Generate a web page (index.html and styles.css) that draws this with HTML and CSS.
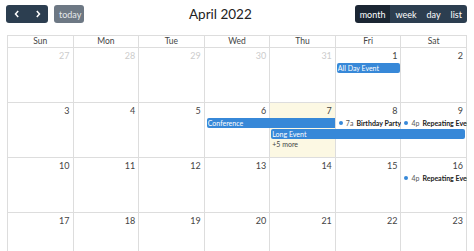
FILE: index.html
```html
<!DOCTYPE html>
<html lang="en">
<head>
    <meta charset="UTF-8">
    <title>Calendar</title>
    <link rel="stylesheet" href="styles.css">
</head>
<body>
    <div class="toolbar">
        <div class="tb-chunk">
            <div class="btn-group">
                <button class="btn btn-icon" aria-label="prev">
                    <svg width="6" height="8" viewBox="0 0 6 8"><path d="M4.2 1 L1.5 4 L4.2 7" fill="none" stroke="#fff" stroke-width="1.5"/></svg>
                </button>
                <button class="btn btn-icon" aria-label="next">
                    <svg width="6" height="8" viewBox="0 0 6 8"><path d="M1.8 1 L4.5 4 L1.8 7" fill="none" stroke="#fff" stroke-width="1.5"/></svg>
                </button>
            </div>
            <button class="btn btn-today">today</button>
        </div>
        <h2 class="title">April 2022</h2>
        <div class="btn-group">
            <button class="btn active">month</button>
            <button class="btn">week</button>
            <button class="btn">day</button>
            <button class="btn">list</button>
        </div>
    </div>

    <div class="cal">
        <div class="head">
            <div>Sun</div><div>Mon</div><div>Tue</div><div>Wed</div><div>Thu</div><div>Fri</div><div>Sat</div>
        </div>

        <div class="week">
            <div class="day c1 other">27</div>
            <div class="day c2 other">28</div>
            <div class="day c3 other">29</div>
            <div class="day c4 other">30</div>
            <div class="day c5 other">31</div>
            <div class="day c6">1</div>
            <div class="day c7">2</div>
            <div class="ev block r1" style="grid-column: 6 / 7">All Day Event</div>
        </div>

        <div class="week">
            <div class="day c1">3</div>
            <div class="day c2">4</div>
            <div class="day c3">5</div>
            <div class="day c4">6</div>
            <div class="day c5 today">7</div>
            <div class="day c6">8</div>
            <div class="day c7">9</div>
            <div class="ev block r1 start" style="grid-column: 4 / 6">Conference</div>
            <div class="ev dot r1" style="grid-column: 6 / 7"><i></i><span class="time">7a</span><b>Birthday Party</b></div>
            <div class="ev dot r1" style="grid-column: 7 / 8"><i></i><span class="time">4p</span><b>Repeating Event</b></div>
            <div class="ev block r2 end" style="grid-column: 5 / 8">Long Event</div>
            <div class="more r3" style="grid-column: 5 / 6">+5 more</div>
        </div>

        <div class="week">
            <div class="day c1">10</div>
            <div class="day c2">11</div>
            <div class="day c3">12</div>
            <div class="day c4">13</div>
            <div class="day c5">14</div>
            <div class="day c6">15</div>
            <div class="day c7">16</div>
            <div class="ev dot r1" style="grid-column: 7 / 8"><i></i><span class="time">4p</span><b>Repeating Event</b></div>
        </div>

        <div class="week">
            <div class="day c1">17</div>
            <div class="day c2">18</div>
            <div class="day c3">19</div>
            <div class="day c4">20</div>
            <div class="day c5">21</div>
            <div class="day c6">22</div>
            <div class="day c7">23</div>
        </div>
    </div>
</body>
</html>
```

FILE: styles.css
```css
body {
    font-family: 'Lato', 'Liberation Sans', sans-serif;
    margin: 0;
    padding: 5px 7px 0 7px;
    background-color: #fff;
    color: #333;
    overflow: hidden;
    height: 251px;
    box-sizing: border-box;
}
.toolbar {
    display: flex;
    align-items: center;
    justify-content: space-between;
    height: 18px;
    margin: 0 0 12px -1px;
}
.tb-chunk {
    display: flex;
    gap: 6px;
}
.title {
    margin: 0 0 0 2px;
    font-size: 13.5px;
    font-weight: 400;
    color: #222;
}
.btn-group {
    display: flex;
    border-radius: 3px;
    overflow: hidden;
}
.btn {
    height: 18px;
    padding: 0 5px;
    border: none;
    background-color: #2c3e50;
    color: #fff;
    font-family: inherit;
    font-size: 9px;
}
.btn-icon {
    width: 21px;
    padding: 0;
    display: flex;
    align-items: center;
    justify-content: center;
}
.btn-today {
    width: 30px;
    border-radius: 3px;
    background-color: #6d7884;
    color: #e6e8ea;
}
.btn.active {
    background-color: #1b2633;
}
.cal {
    border-left: 1px solid #ddd;
    border-top: 1px solid #ddd;
}
.head {
    display: grid;
    grid-template-columns: repeat(7, 1fr);
    height: 12px;
}
.head div {
    border-right: 1px solid #ddd;
    border-bottom: 1px solid #ddd;
    text-align: center;
    font-size: 8.5px;
    line-height: 11px;
    color: #444;
}
.week {
    display: grid;
    grid-template-columns: repeat(7, 1fr);
    grid-template-rows: 15px 10.5px 10.5px 10.5px 1fr;
    height: 55px;
}
.day {
    grid-row: 1 / -1;
    border-right: 1px solid #ddd;
    border-bottom: 1px solid #ddd;
    text-align: right;
    padding: 2px 3px 0 0;
    font-size: 9px;
    line-height: 11px;
    color: #444;
}
.c1 { grid-column: 1; }
.c2 { grid-column: 2; }
.c3 { grid-column: 3; }
.c4 { grid-column: 4; }
.c5 { grid-column: 5; }
.c6 { grid-column: 6; }
.c7 { grid-column: 7; }
.day.other {
    color: #ccc;
}
.day.today {
    background-color: #fcf8e3;
}
.r1 { grid-row: 2; }
.r2 { grid-row: 3; }
.r3 { grid-row: 4; }
.ev {
    font-size: 7px;
    line-height: 10px;
    height: 10px;
    white-space: nowrap;
    overflow: hidden;
    z-index: 1;
}
.ev.block {
    margin: 0 1px 0 1px;
    padding-left: 1px;
    background-color: #3788d8;
    border-radius: 2px;
    color: #fff;
}
.ev.block.start {
    margin-left: 2px;
    border-radius: 2px 0 0 2px;
}
.ev.block.end {
    margin-right: 2px;
    border-radius: 2px;
}
.ev.dot {
    display: flex;
    align-items: center;
    padding-left: 3px;
    color: #222;
}
.ev.dot i {
    width: 4px;
    height: 4px;
    border-radius: 50%;
    background-color: #3788d8;
    margin-right: 3px;
    flex: none;
}
.ev.dot .time {
    color: #555;
    margin-right: 3px;
}
.more {
    font-size: 7px;
    line-height: 10px;
    padding-left: 2px;
    color: #444;
    z-index: 1;
}
```
